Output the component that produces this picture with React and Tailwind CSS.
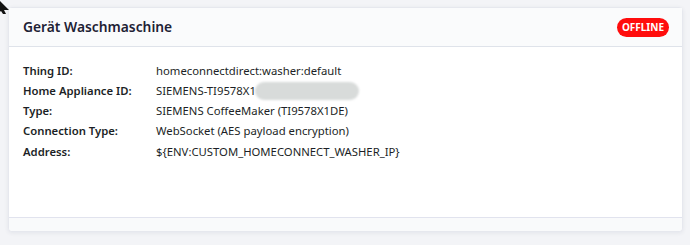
import React from 'react';

const rows = [
    ['Thing ID:', 'homeconnectdirect:washer:default'],
    ['Home Appliance ID:', 'SIEMENS-TI9578X1', true],
    ['Type:', 'SIEMENS CoffeeMaker (TI9578X1DE)'],
    ['Connection Type:', 'WebSocket (AES payload encryption)'],
    ['Address:', '${ENV:CUSTOM_HOMECONNECT_WASHER_IP}'],
];

function Cursor() {
    return (
        <svg className="absolute left-0 top-0" width="10" height="14" viewBox="0 0 10 14">
            <path d="M-3 -2 L9 10 L4 10 L6 14 L3 14 L1 11 L-3 14 Z" fill="#111" />
        </svg>
    );
}

export default function App() {
    return (
        <div className="relative w-[690px] h-[245px] bg-[#f3f4f7] pt-[7px] pl-[8px] pr-[7px] font-['Noto_Sans',sans-serif]">
            <Cursor />
            <div className="w-[675px] h-[225px] bg-white border border-[#e6e8ee] rounded-[4px] shadow-[0_1px_4px_rgba(40,50,90,0.08)] flex flex-col">
                <div className="h-[39px] flex items-center justify-between pl-[14px] pr-[13px] bg-[#fafbfc] border-b border-[#dfe3ea]">
                    <h3 className="text-[13.8px] font-semibold text-[#1e2235]">Gerät Waschmaschine</h3>
                    <span className="bg-[#ff0d0d] text-white text-[10px] font-bold leading-none px-[5px] py-[4.5px] rounded-full">
                        OFFLINE
                    </span>
                </div>
                <div className="flex-1 px-[14px] pt-[14px] text-[11.3px] text-[#1c1f26]">
                    {rows.map(([label, value, blur]) => (
                        <div key={label} className="flex h-[20.25px] items-center">
                            <div className="w-[133px] font-semibold">{label}</div>
                            <div className="relative flex items-center">
                                {value}
                                {blur && (
                                    <span className="ml-[-1px] w-[104px] h-[18px] rounded-full bg-[#d8dbda] blur-[1px]" />
                                )}
                            </div>
                        </div>
                    ))}
                </div>
                <div className="h-[14px] bg-[#f9fafb] border-t border-[#e1e3ee] rounded-b-[4px]" />
            </div>
        </div>
    );
}
